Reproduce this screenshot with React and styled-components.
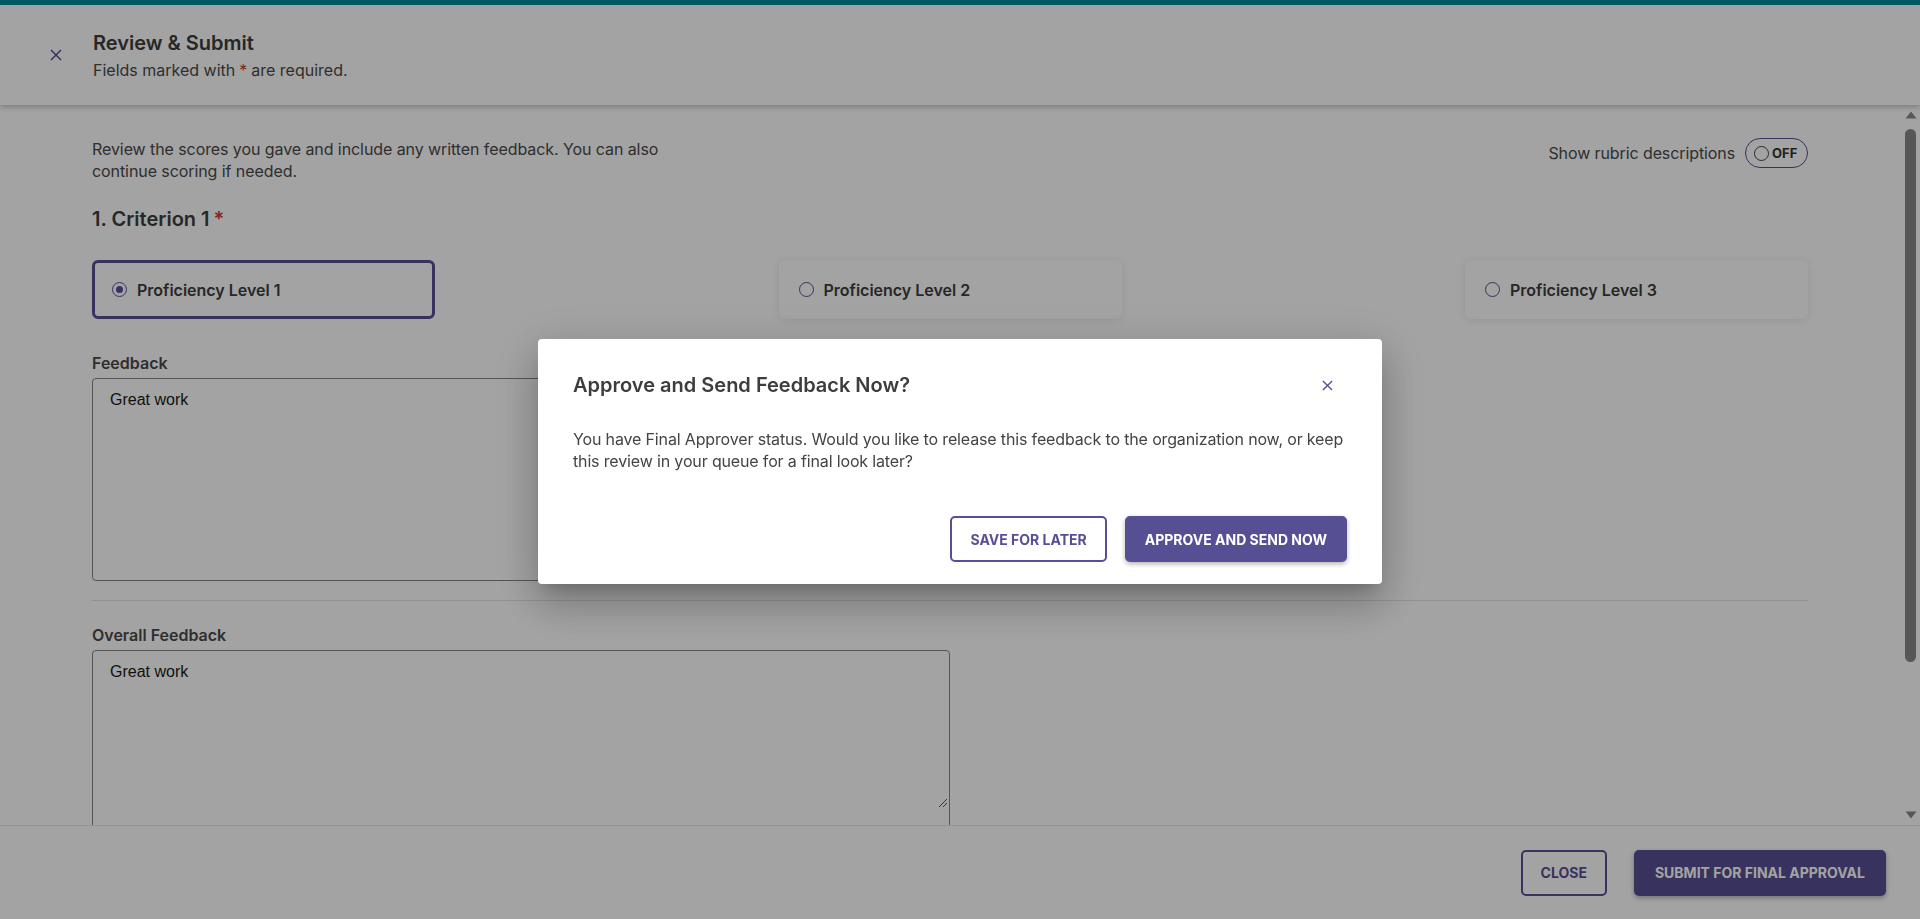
import React from 'react';
import styled, { createGlobalStyle } from 'styled-components';

const purple = '#574f94';
const scrollGrey = '#898989';

const GlobalStyle = createGlobalStyle`
  * { box-sizing: border-box; }
  html, body { margin: 0; height: 100%; }
  body {
    font-family: Inter, "Noto Sans", sans-serif;
    color: #3d3d3d;
    background: #fff;
  }
  #root { height: 100%; }
`;

const Page = styled.div`
  height: 100vh;
  display: flex;
  flex-direction: column;
  border-top: 5px solid #00909f;
`;

const Header = styled.header`
  display: flex;
  align-items: center;
  gap: 17px;
  padding: 24px 36px;
  background: #fff;
  box-shadow: 0 2px 6px rgba(0, 0, 0, 0.25);
  position: relative;
  z-index: 1;
`;

const IconButton = styled.button`
  width: 40px;
  height: 40px;
  display: flex;
  align-items: center;
  justify-content: center;
  border: none;
  background: transparent;
  color: ${purple};
  padding: 0;
  cursor: pointer;
`;

const HeaderText = styled.div`
  display: flex;
  flex-direction: column;
  gap: 2px;
`;

const Title = styled.h1`
  margin: 0;
  font-size: 20px;
  line-height: 28px;
  font-weight: 600;
  color: #3d3d3d;
`;

const Subtitle = styled.p`
  margin: 0;
  font-size: 16px;
  line-height: 22px;
  color: #4a4a4a;
`;

const Star = styled.span`
  color: #d0392b;
  margin: 0 4px;
`;

const Body = styled.div`
  flex: 1;
  min-height: 0;
  display: flex;
  background: #fff;
`;

const Content = styled.main`
  flex: 1;
  overflow-y: auto;
  padding: 33px 97px 174px 92px;
`;

const ScrollTrack = styled.div`
  width: 15px;
  flex: none;
  display: flex;
  flex-direction: column;
  align-items: flex-start;
`;

const ScrollArrow = styled.svg`
  display: block;
  margin: ${(p) => (p.$down ? 'auto 0 6px -0.5px' : '6px 0 0 -0.5px')};
`;

const ScrollThumb = styled.div`
  width: 11px;
  height: 533px;
  margin-top: 10px;
  border-radius: 6px;
  background: ${scrollGrey};
`;

const IntroRow = styled.div`
  display: flex;
  justify-content: space-between;
  align-items: flex-start;
`;

const Intro = styled.p`
  margin: 0;
  max-width: 600px;
  font-size: 16px;
  line-height: 22px;
  letter-spacing: -0.08px;
  color: #4a4a4a;
`;

const ToggleRow = styled.label`
  display: flex;
  align-items: center;
  gap: 10px;
  font-size: 16px;
  letter-spacing: -0.1px;
  color: #4a4a4a;
`;

const Pill = styled.span`
  width: 63px;
  height: 30px;
  border: 1px solid ${purple};
  border-radius: 15px;
  padding: 0 8px;
  display: flex;
  align-items: center;
  gap: 3px;
  font-size: 13px;
  font-weight: 700;
  letter-spacing: 0;
  color: #333;
`;

const Knob = styled.span`
  width: 15px;
  height: 15px;
  border: 1px solid #444;
  border-radius: 50%;
`;

const CriterionTitle = styled.h2`
  margin: 23px 0 27px;
  font-size: 20px;
  line-height: 28px;
  font-weight: 600;
  color: #3d3d3d;
`;

const Levels = styled.div`
  display: flex;
  justify-content: space-between;
`;

const LevelCard = styled.div`
  width: 343px;
  height: 59px;
  display: flex;
  align-items: center;
  gap: 10px;
  padding: 0 17px;
  background: #fff;
  border: 3px solid ${(p) => (p.$selected ? purple : 'transparent')};
  border-radius: 6px;
  box-shadow: ${(p) => (p.$selected ? 'none' : '0 1px 8px rgba(0, 0, 0, 0.09)')};
  font-size: 16px;
  font-weight: 600;
  color: #3d3d3d;
`;

const Radio = styled.span`
  width: 15px;
  height: 15px;
  flex: none;
  border: 1.5px solid ${purple};
  border-radius: 50%;
  display: flex;
  align-items: center;
  justify-content: center;
  &::after {
    content: '';
    width: 7px;
    height: 7px;
    border-radius: 50%;
    background: ${(p) => (p.$checked ? purple : 'transparent')};
  }
`;

const FieldLabel = styled.div`
  margin: ${(p) => p.$top}px 0 4px;
  font-size: 16px;
  line-height: 22px;
  font-weight: 600;
  color: #4a4a4a;
`;

const FieldBox = styled.div`
  position: relative;
  width: 50%;
`;

const TextArea = styled.textarea`
  display: block;
  width: 100%;
  height: 203px;
  padding: 12px 17px;
  border: 1px solid #858585;
  border-radius: 4px;
  font-family: "Liberation Sans", Arial, sans-serif;
  font-size: 16px;
  line-height: 18px;
  color: #1a1a1a;
  background: #fff;
  resize: none;
`;

const Grip = styled.svg`
  position: absolute;
  right: 2px;
  top: 148px;
`;

const Divider = styled.hr`
  margin: 19px 0 0;
  border: none;
  border-top: 1px solid #e2e2e2;
`;

const Footer = styled.footer`
  height: 94px;
  flex: none;
  display: flex;
  justify-content: flex-end;
  align-items: center;
  gap: 27px;
  padding-right: 34px;
  background: #fff;
  border-top: 1px solid #e6e6e6;
`;

const Button = styled.button`
  height: 46px;
  padding: 0 ${(p) => p.$pad || 18}px;
  border-radius: 5px;
  border: 2px solid ${purple};
  background: ${(p) => (p.$primary ? purple : '#fff')};
  color: ${(p) => (p.$primary ? '#fff' : purple)};
  box-shadow: ${(p) => (p.$primary ? '0 2px 5px rgba(0, 0, 0, 0.3)' : 'none')};
  font-family: Inter, "Noto Sans", sans-serif;
  font-size: 14px;
  font-weight: 700;
  text-transform: uppercase;
  cursor: pointer;
`;

const Backdrop = styled.div`
  position: fixed;
  inset: 0;
  z-index: 10;
  padding-top: 4px;
  background: rgba(0, 0, 0, 0.36);
  display: flex;
  align-items: center;
  justify-content: center;
`;

const Dialog = styled.div`
  width: 844px;
  background: #fff;
  border-radius: 4px;
  padding: 32px 35px 22px;
  box-shadow: 0 11px 15px -7px rgba(0, 0, 0, 0.2), 0 24px 38px 3px rgba(0, 0, 0, 0.14),
    0 9px 46px 8px rgba(0, 0, 0, 0.12);
`;

const DialogHead = styled.div`
  display: flex;
  justify-content: space-between;
  align-items: center;
  height: 28px;
`;

const DialogTitle = styled.h2`
  margin: 0;
  font-size: 20px;
  line-height: 28px;
  font-weight: 600;
  color: #3d3d3d;
`;

const DialogBody = styled.p`
  margin: 29px 0 0;
  font-size: 16px;
  line-height: 22px;
  letter-spacing: -0.15px;
  color: #444;
`;

const DialogActions = styled.div`
  margin-top: 44px;
  display: flex;
  justify-content: flex-end;
  gap: 18px;
`;

const CloseIcon = ({ size = 12 }) => (
  <svg width={size} height={size} viewBox="0 0 12 12" fill="none" stroke="currentColor" strokeWidth="1.5">
    <path d="M1 1l10 10M11 1L1 11" />
  </svg>
);

const levels = ['Proficiency Level 1', 'Proficiency Level 2', 'Proficiency Level 3'];

export default function App() {
  return (
    <>
      <GlobalStyle />
      <Page>
        <Header>
          <IconButton aria-label="Close">
            <CloseIcon />
          </IconButton>
          <HeaderText>
            <Title>Review &amp; Submit</Title>
            <Subtitle>
              Fields marked with<Star>*</Star>are required.
            </Subtitle>
          </HeaderText>
        </Header>

        <Body>
          <Content>
            <IntroRow>
              <Intro>
                Review the scores you gave and include any written feedback. You can also continue scoring if
                needed.
              </Intro>
              <ToggleRow>
                Show rubric descriptions
                <Pill>
                  <Knob />
                  OFF
                </Pill>
              </ToggleRow>
            </IntroRow>

            <CriterionTitle>
              1. Criterion 1<Star>*</Star>
            </CriterionTitle>

            <Levels>
              {levels.map((level, i) => (
                <LevelCard key={level} $selected={i === 0}>
                  <Radio $checked={i === 0} />
                  {level}
                </LevelCard>
              ))}
            </Levels>

            <FieldLabel $top={33}>Feedback</FieldLabel>
            <FieldBox>
              <TextArea defaultValue="Great work" />
            </FieldBox>

            <Divider />

            <FieldLabel $top={23}>Overall Feedback</FieldLabel>
            <FieldBox>
              <TextArea defaultValue="Great work" />
              <Grip width="10" height="10" viewBox="0 0 10 10" stroke="#555" strokeWidth="1">
                <path d="M9 1L1 9M9 5L5 9" />
              </Grip>
            </FieldBox>
          </Content>

          <ScrollTrack aria-hidden="true">
            <ScrollArrow width="12" height="8" viewBox="0 0 12 8">
              <path d="M6 0.5L11.5 7.5H0.5z" fill={scrollGrey} />
            </ScrollArrow>
            <ScrollThumb />
            <ScrollArrow $down width="12" height="8" viewBox="0 0 12 8">
              <path d="M0.5 0.5h11L6 7.5z" fill={scrollGrey} />
            </ScrollArrow>
          </ScrollTrack>
        </Body>

        <Footer>
          <Button $pad={18}>Close</Button>
          <Button $primary $pad={19}>Submit for Final Approval</Button>
        </Footer>
      </Page>

      <Backdrop>
        <Dialog>
          <DialogHead>
            <DialogTitle>Approve and Send Feedback Now?</DialogTitle>
            <IconButton aria-label="Close dialog">
              <CloseIcon size={11} />
            </IconButton>
          </DialogHead>
          <DialogBody>
            You have Final Approver status. Would you like to release this feedback to the organization now,
            or keep this review in your queue for a final look later?
          </DialogBody>
          <DialogActions>
            <Button>Save for Later</Button>
            <Button $primary>Approve and Send Now</Button>
          </DialogActions>
        </Dialog>
      </Backdrop>
    </>
  );
}
